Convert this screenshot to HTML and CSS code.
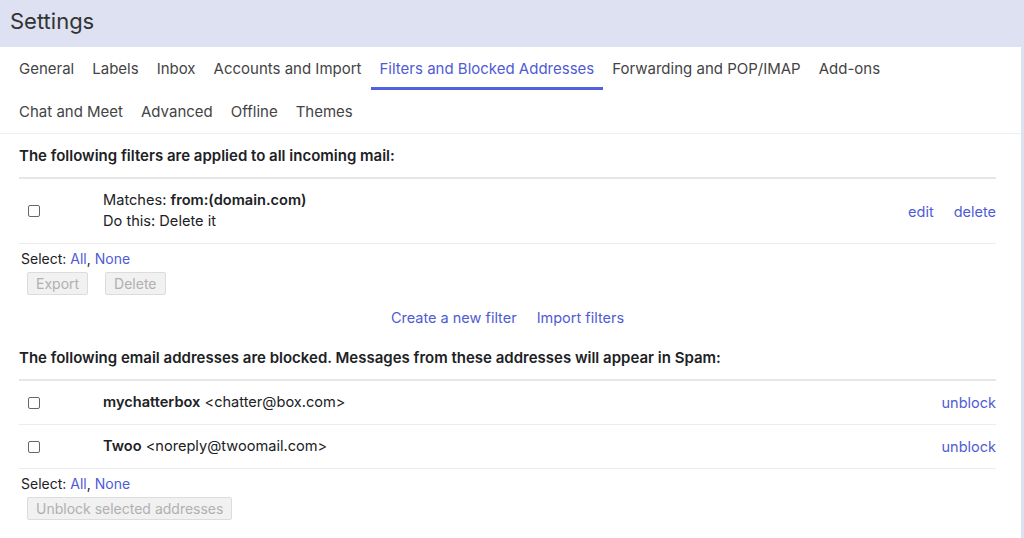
FILE: index.html
```html
<!DOCTYPE html>
<html>

<head>
  <meta charset="UTF-8">
  <link rel="stylesheet" href="styles.css">
</head>

<body>
  <div class="top">Settings</div>

  <div class="panel">
    <div class="tabs">
      <a class="tab">General</a>
      <a class="tab">Labels</a>
      <a class="tab">Inbox</a>
      <a class="tab">Accounts and Import</a>
      <a class="tab active">Filters and Blocked Addresses</a>
      <a class="tab">Forwarding and POP/IMAP</a>
      <a class="tab">Add-ons</a>
      <a class="tab">Chat and Meet</a>
      <a class="tab">Advanced</a>
      <a class="tab">Offline</a>
      <a class="tab">Themes</a>
    </div>

    <div class="content">
      <div class="heading">The following filters are applied to all incoming mail:</div>
      <div class="list">
        <div class="row tall">
          <div class="check"><span class="box"></span></div>
          <div class="info">
            <div>Matches: <b>from:(domain.com)</b></div>
            <div>Do this: Delete it</div>
          </div>
          <div class="actions"><a>edit</a><a>delete</a></div>
        </div>
      </div>
      <div class="select">Select: <a>All</a>, <a>None</a></div>
      <div class="buttons">
        <button class="btn">Export</button>
        <button class="btn">Delete</button>
      </div>
      <div class="links"><a>Create a new filter</a><a>Import filters</a></div>

      <div class="heading">The following email addresses are blocked. Messages from these addresses will appear in Spam:</div>
      <div class="list">
        <div class="row">
          <div class="check"><span class="box"></span></div>
          <div class="info"><b>mychatterbox</b> &lt;chatter@box.com&gt;</div>
          <div class="actions"><a>unblock</a></div>
        </div>
        <div class="row">
          <div class="check"><span class="box"></span></div>
          <div class="info"><b>Twoo</b> &lt;noreply@twoomail.com&gt;</div>
          <div class="actions"><a>unblock</a></div>
        </div>
      </div>
      <div class="select">Select: <a>All</a>, <a>None</a></div>
      <div class="buttons">
        <button class="btn">Unblock selected addresses</button>
      </div>
    </div>
  </div>
</body>

</html>
```

FILE: styles.css
```css
body {
  margin: 0;
  background-color: #dde1f1;
  font-family: Inter, "Liberation Sans", sans-serif;
  color: #202124;
  font-size: 14px;
}
a {
  color: #4f5bd5;
  cursor: pointer;
}
div.top {
  height: 47px;
  line-height: 43px;
  padding-left: 10px;
  font-size: 22px;
  color: #333;
}
div.panel {
  background-color: #fff;
  margin-right: 3px;
  height: 491px;
}
div.tabs {
  display: flex;
  flex-wrap: wrap;
  padding-left: 10px;
  padding-right: 100px;
  border-bottom: 1px solid #eceef3;
}
a.tab {
  height: 40px;
  line-height: 43px;
  padding: 0 9px;
  font-size: 15px;
  color: #444;
  border-bottom: 3px solid transparent;
}
a.tab.active {
  color: #4f5bd5;
  border-bottom-color: #5160e0;
}
div.content {
  padding: 0 25px 0 19px;
}
div.heading {
  font-weight: 600;
  font-size: 15px;
  padding: 13px 0 12px;
  line-height: 18px;
  border-bottom: 2px solid #e6e6e6;
}
div.row {
  display: flex;
  align-items: center;
  height: 43px;
  border-bottom: 1px solid #ececec;
}
div.row.tall {
  height: 64px;
}
div.check {
  width: 84px;
  padding-left: 9px;
  box-sizing: border-box;
  display: flex;
}
span.box {
  width: 10px;
  height: 10px;
  border: 1.5px solid #666;
  border-radius: 2px;
}
div.info {
  flex: 1;
  line-height: 21px;
  font-size: 14.6px;
}
div.info b {
  font-weight: 600;
}
div.actions {
  display: flex;
  gap: 20px;
  font-size: 14.5px;
}
div.select {
  padding: 6px 0 0 2px;
  line-height: 17px;
}
div.buttons {
  display: flex;
  gap: 17px;
  padding: 5px 0 0 8px;
}
button.btn {
  height: 23px;
  padding: 0 8px;
  font-family: Inter, "Liberation Sans", sans-serif;
  font-size: 14px;
  color: #b0b0b0;
  background-color: #f1f1f1;
  border: 1px solid #dcdcdc;
  border-radius: 2px;
}
div.links {
  display: flex;
  justify-content: center;
  gap: 20px;
  padding: 13px 0 8px;
  font-size: 14.5px;
  line-height: 20px;
}
```
